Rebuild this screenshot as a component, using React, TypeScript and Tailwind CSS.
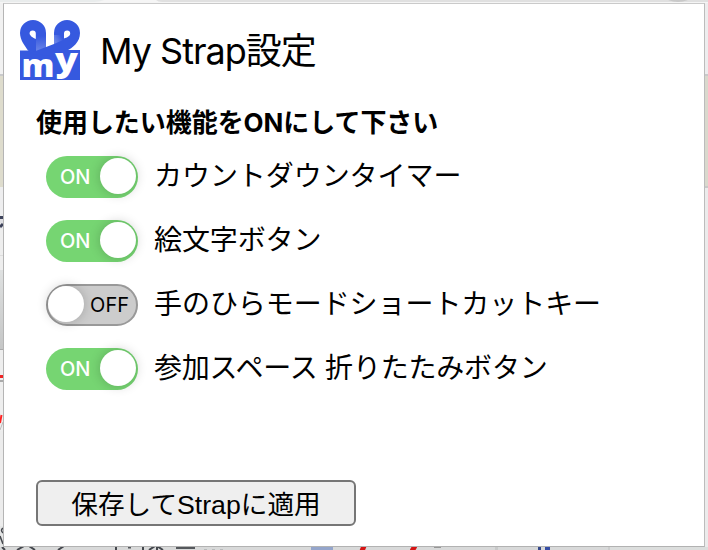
import React from 'react';

const options = [
  { label: 'カウントダウンタイマー', on: true, tracking: 'tracking-[-0.06px]' },
  { label: '絵文字ボタン', on: true, tracking: 'tracking-[-0.1px]' },
  { label: '手のひらモードショートカットキー', on: false, tracking: 'tracking-[-0.06px]' },
  { label: '参加スペース 折りたたみボタン', on: true, tracking: 'tracking-[-0.2px]' },
];

function Logo() {
  return (
    <svg width="60" height="60" viewBox="0 0 60 60" className="block shrink-0 overflow-visible">
      <defs>
        <linearGradient id="fadeL" x1="0" y1="0" x2="0" y2="1">
          <stop offset="0" stopColor="#3659df" />
          <stop offset="1" stopColor="#6d87e8" />
        </linearGradient>
        <linearGradient id="fadeR" x1="1" y1="0" x2="0" y2="0.6">
          <stop offset="0.2" stopColor="#3659df" />
          <stop offset="1" stopColor="#6d87e8" />
        </linearGradient>
      </defs>
      <path d="M0 30.5H9L20 34L42 30H60V60H0Z" fill="#3659df" />
      <path
        fillRule="evenodd"
        d="M0 13A13 13 0 0 1 26 13V29L14 34L8 30.5C5 26 0 20 0 13ZM15.8 19V13.5A3.1 3.1 0 0 0 9.6 13.5C9.6 15.5 13 18 15.8 19Z"
        fill="#3659df"
      />
      <path d="M16 16H26V28L16 32Z" fill="url(#fadeL)" />
      <path
        fillRule="evenodd"
        d="M60 13A13 13 0 0 0 34 13V24L9 33.5L40 37L46 31C53 28 60 22 60 13ZM44 18.5V13.5A3.1 3.1 0 0 1 50.2 13.5C50.2 16 47 17.5 44 18.5Z"
        fill="#3659df"
      />
      <path d="M34 15H43V20L34 24Z" fill="url(#fadeR)" />
      <text x="1.5" y="57" fontSize="31" fontWeight="800" fill="#fff" textLength="33" lengthAdjust="spacingAndGlyphs" className="font-['Open_Sans',sans-serif]">m</text>
      <text x="35" y="50.5" fontSize="32" fontWeight="800" fill="#fff" textLength="23" lengthAdjust="spacingAndGlyphs" className="font-['Open_Sans',sans-serif]">y</text>
    </svg>
  );
}

function Toggle({ on }: { on: boolean }) {
  return on ? (
    <div className="flex h-[42px] w-[92px] items-center justify-between rounded-full bg-[#76d572] pl-[14px] pr-[2px]">
      <span className="text-[20px] font-medium leading-none text-white">ON</span>
      <span className="-mt-[2px] size-9 rounded-full bg-white shadow-[0_0_12px_rgba(0,0,0,0.2)]" />
    </div>
  ) : (
    <div className="flex h-[42px] w-[92px] items-center justify-between rounded-full border-2 border-[#999] bg-[#ccc] pr-[7px]">
      <span className="-mt-[2px] size-9 rounded-full bg-white shadow-[0_0_12px_rgba(0,0,0,0.2)]" />
      <span className="text-[20px] leading-none text-black">OFF</span>
    </div>
  );
}

function EdgeLeft() {
  return (
    <div className="flex w-[3px] shrink-0 flex-col overflow-hidden">
      <div className="h-[71px] bg-[#f1f1f1]" />
      <div className="h-[2px] bg-[#c9c9cb]" />
      <div className="h-[112px] bg-[#dedccd]" />
      <div className="h-[29px] bg-[#eeeeef]" />
      <div className="h-[3px] bg-[#3e435b]" />
      <div className="h-[4px] bg-[#e0e0e4]" />
      <svg width="3" height="6" className="block bg-[#e8e8ea]"><path d="M0 4L3 1" stroke="#3e435b" strokeWidth="3" /></svg>
      <div className="h-[26px] bg-[#eee]" />
      <div className="h-[1px] bg-[#ddd]" />
      <div className="h-[14px] bg-[#eee]" />
      <div className="h-[80px] bg-linear-to-b from-[#dfe1e1] to-[#c5c6c6]" />
      <div className="h-[1px] bg-[#aaa]" />
      <div className="h-[25px] bg-[#eee]" />
      <div className="h-[3px] bg-[#ef2323]" />
      <div className="h-[2px] bg-[#eee]" />
      <div className="h-[2px] bg-[#aaa]" />
      <div className="h-[32px] bg-[#eee]" />
      <svg width="3" height="17" className="block bg-[#eee]"><path d="M1.5 1L0 9" stroke="#f22" strokeWidth="2" /><path d="M3 8L0 16" stroke="#bbb" strokeWidth="1" /></svg>
      <div className="h-[96px] bg-[#ececec]" />
      <svg width="3" height="21" className="block grow bg-[#e4e5e5]"><path d="M3 2Q0 4 3 7M0 10L3 18" stroke="#44474d" strokeWidth="1.5" fill="none" /></svg>
    </div>
  );
}

function EdgeRight() {
  return (
    <div className="flex w-[3px] shrink-0 flex-col">
      <div className="h-[71px] bg-[#ededee]" />
      <div className="h-[2px] bg-[#c9cacb]" />
      <div className="h-[110px] bg-[#d9d9cd]" />
      <div className="h-[2px] bg-[#c8c9c8]" />
      <div className="grow bg-[#ebebeb]" />
    </div>
  );
}

export default function App() {
  return (
    <div className="flex h-[550px] w-[708px] flex-col overflow-hidden bg-[#ececec] font-[Inter,'Noto_Sans_CJK_JP',sans-serif] text-black">
      <svg width="708" height="3" className="block shrink-0">
        <rect width="708" height="3" fill="#f5f5f5" />
        <path d="M0 0H104Q100 2 94 2H0Z" fill="#e9ecec" />
        <path d="M156 0H708V2H162Q158 2 156 0Z" fill="#e0e0e0" />
        <path d="M668 0H688Q678 4 668 0Z" fill="#c9c9c9" />
      </svg>
      <div className="flex h-[544px] shrink-0">
        <EdgeLeft />
        <main className="flex w-[702px] shrink-0 flex-col border border-t-[#cacaca] border-r-[#bcbcbc] border-b-[#b2b2b2] border-l-[#b5b5b5] bg-white">
          <header className="flex h-[92px] items-center gap-5 pl-4">
            <Logo />
            <h1 className="whitespace-nowrap pt-[2px] text-[36px] leading-none tracking-[-1px]">My Strap設定</h1>
          </header>
          <section className="flex flex-col pl-8">
            <h2 className="flex h-[52px] items-center whitespace-nowrap pt-[2px] text-[26px] font-bold leading-none tracking-[-0.05px]">使用したい機能をONにして下さい</h2>
            <div className="mt-2 flex flex-col gap-[22px] pl-[10px]">
              {options.map((option) => (
                <label key={option.label} className="flex h-[42px] items-center gap-4">
                  <Toggle on={option.on} />
                  <span className={`whitespace-nowrap pb-[2px] text-[28px] leading-none ${option.tracking}`}>{option.label}</span>
                </label>
              ))}
            </div>
            <button className="mt-[90px] h-[46px] w-[320px] whitespace-nowrap rounded-[6px] border-2 border-[#767676] bg-[#efefef] pt-[4px] font-['Liberation_Sans','Noto_Sans_CJK_JP',sans-serif] text-[26.67px] leading-none">保存してStrapに適用</button>
          </section>
        </main>
        <EdgeRight />
      </div>
      <svg width="708" height="3" className="block shrink-0">
        <rect width="708" height="3" fill="#d8d9d9" />
        <rect x="609" width="99" height="3" fill="#dcdedd" />
        <path d="M2 0L5 3M24 -1L17 3M29 -1L35 3M64 -1L58 3M116 0V3M143 0V3M155 -1L149 3M157 0V3M157 -1L163 3" stroke="#44474d" strokeWidth="2" />
        <path d="M128 0.5H131M176 1H195" stroke="#55585c" strokeWidth="2" />
        <path d="M204 2.5H226" stroke="#b8babb" strokeWidth="1" strokeDasharray="3 5" />
        <rect x="311" width="22" height="3" fill="#94a5cb" />
        <path d="M364 -1L362 4M415 -1L412 4" stroke="#d51414" strokeWidth="5" />
        <path d="M434 0H441" stroke="#555" strokeWidth="1" />
        <rect x="495" width="3" height="3" fill="#c8c9c9" />
        <rect x="538" width="3" height="3" fill="#35498a" />
        <rect x="545" width="5" height="3" fill="#354da5" />
        <rect x="608" width="2" height="3" fill="#cbcccc" />
      </svg>
    </div>
  );
}
